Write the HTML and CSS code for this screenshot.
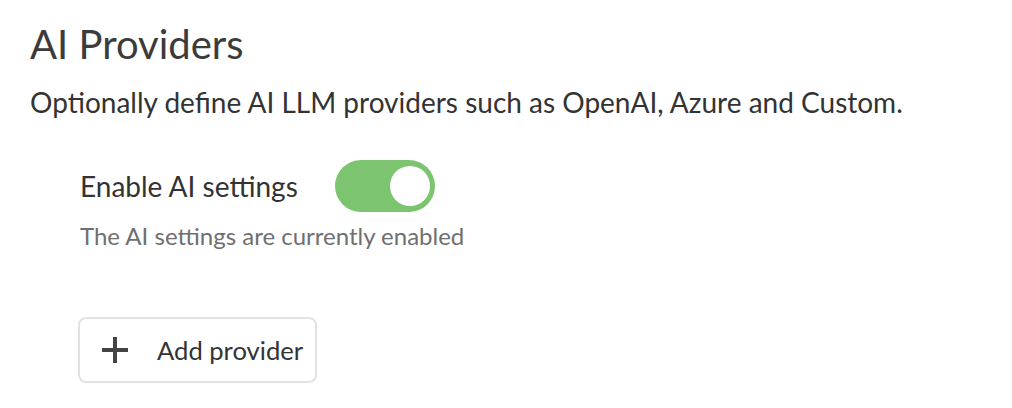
FILE: index.html
```html
<!DOCTYPE html>
<html>
<head>
<meta charset="utf-8">
<link rel="stylesheet" href="styles.css">
</head>
<body>
<div class="page">
  <h1 class="title">AI Providers</h1>
  <p class="desc">Optionally define AI LLM providers such as OpenAI, Azure and Custom.</p>
  <div class="setting">
    <div class="setting-row">
      <span class="setting-label">Enable AI settings</span>
      <span class="toggle"><span class="knob"></span></span>
    </div>
    <div class="hint">The AI settings are currently enabled</div>
  </div>
  <button class="add-btn">
    <svg class="plus" width="26" height="26" viewBox="0 0 26 26"><path d="M13 0v26M0 13h26" stroke="#444" stroke-width="4" fill="none"/></svg>
    <span>Add provider</span>
  </button>
</div>
</body>
</html>
```
FILE: styles.css
```css
html, body { margin: 0; padding: 0; background: #fff; }
body { font-family: Lato, "Open Sans", sans-serif; color: #3b3b3b; }
.page { padding: 20px 30px; }
.title { margin: 0; font-size: 40px; font-weight: 400; line-height: 48px; color: #3b3b3b; }
.desc { margin: 16px 0 0; font-size: 28px; line-height: 36px; color: #333; }
.setting { margin: 40px 0 0 50px; }
.setting-row { display: flex; align-items: center; gap: 37px; }
.setting-label { font-size: 28px; line-height: 32px; color: #333; }
.toggle { width: 100px; height: 52px; border-radius: 26px; background: #7dc470; display: flex; align-items: center; justify-content: flex-end; padding-right: 5px; box-sizing: border-box; }
.knob { width: 40px; height: 40px; border-radius: 50%; background: #fff; }
.hint { margin-top: 10px; font-size: 24px; line-height: 28px; color: #6f6f6f; }
.add-btn { margin: 67px 0 0 48px; display: flex; align-items: center; gap: 29px; height: 66px; padding: 0 12px 0 22px; border: 2px solid #e2e2e2; border-radius: 8px; background: #fff; font-family: inherit; font-size: 25.6px; color: #333; }
.plus { display: block; }
```
